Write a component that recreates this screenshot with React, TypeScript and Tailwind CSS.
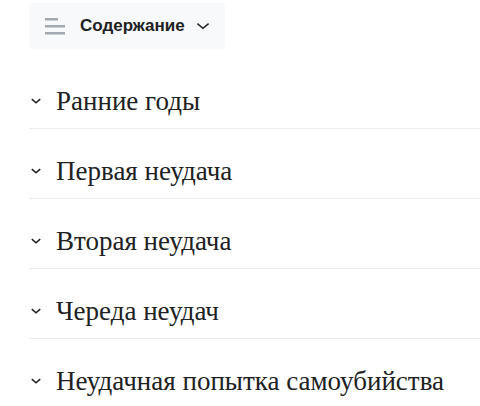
import React from 'react'

const sections = [
  'Ранние годы',
  'Первая неудача',
  'Вторая неудача',
  'Череда неудач',
  'Неудачная попытка самоубийства',
]

function ListIcon() {
  return (
    <svg width="20" height="20" viewBox="0 0 20 20" className="shrink-0">
      <rect x="0" y="2" width="13" height="2.5" fill="#a2a9b1" />
      <rect x="0" y="9" width="20" height="2.5" fill="#a2a9b1" />
      <rect x="0" y="16" width="20" height="2.5" fill="#a2a9b1" />
    </svg>
  )
}

function Chevron({ size, stroke }: { size: number; stroke: number }) {
  return (
    <svg width={size} height={size} viewBox="0 0 20 20" className="shrink-0">
      <path d="M3 7l7 6 7-6" fill="none" stroke="#202122" strokeWidth={stroke} />
    </svg>
  )
}

export default function App() {
  return (
    <div className="w-[480px] h-[406px] overflow-hidden bg-white pl-[29px] pt-[3px]">
      <button className="flex items-center h-[46px] w-[196px] pl-[16px] pr-[14px] bg-[#f8f9fa] rounded-sm">
        <ListIcon />
        <span className="ml-[15px] font-['Liberation_Sans',Arial,sans-serif] text-[17px] font-bold text-[#202122]">
          Содержание
        </span>
        <span className="ml-auto">
          <Chevron size={16} stroke={1.8} />
        </span>
      </button>

      <div className="mt-[37px]">
        {sections.map((title) => (
          <div key={title} className="flex items-center h-[30px] mb-[40px] relative">
            <span className="ml-[1px]">
              <Chevron size={12} stroke={2.6} />
            </span>
            <h2 className="ml-[14px] font-['Liberation_Serif','Times_New_Roman',serif] text-[27px] leading-[30px] text-[#202122]">
              {title}
            </h2>
            <div className="absolute left-0 right-0 top-[42px] h-px bg-[#eaecf0]" />
          </div>
        ))}
      </div>
    </div>
  )
}
